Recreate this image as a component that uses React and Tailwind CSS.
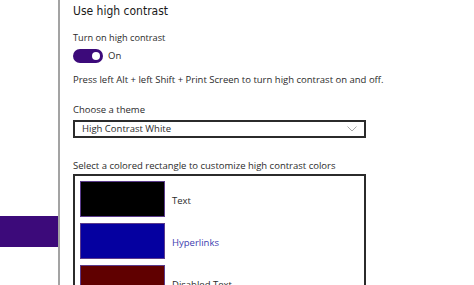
import React from "react";

const font = { fontFamily: '"Open Sans", "Noto Sans", sans-serif' };

function Swatch({ color, label, labelClass }) {
  return (
    <div className="flex items-center">
      <div className={`w-[85px] h-[36px] border border-[#5b3b8c] ${color}`} />
      <span className={`ml-[7px] mt-[3px] text-[9.5px] leading-[14px] ${labelClass}`}>{label}</span>
    </div>
  );
}

export default function App() {
  return (
    <div className="w-[474px] h-[285px] bg-white flex overflow-hidden text-[#2b2b2b]" style={font}>
      <div className="w-[58px] h-full flex flex-col shrink-0">
        <div className="h-[216px]" />
        <div className="h-[31px] bg-[#3c0a7a]" />
      </div>
      <div className="w-[2px] h-full bg-[#a3a3a3] shrink-0" />
      <div className="flex flex-col pl-[13px]">
        <div
          className="mt-[1px] h-[20px] leading-[20px] text-[12px] font-stretch-condensed text-[#1a1a1a] whitespace-nowrap"
          style={{ fontFamily: '"DejaVu Sans Condensed", "DejaVu Sans", "Open Sans", sans-serif' }}
        >
          Use high contrast
        </div>
        <div className="mt-[10px] h-[14px] leading-[14px] text-[9.2px]">Turn on high contrast</div>
        <div className="mt-[4px] h-[14px] flex items-center">
          <div className="w-[30px] h-[14px] rounded-full bg-[#3c0a7a] flex items-center justify-end pr-[3px]">
            <div className="w-[8px] h-[8px] rounded-full bg-white" />
          </div>
          <span className="ml-[5px] text-[9.5px] leading-[14px]">On</span>
        </div>
        <div className="mt-[10px] h-[14px] leading-[14px] text-[9.5px] whitespace-nowrap">
          Press left Alt + left Shift + Print Screen to turn high contrast on and off.
        </div>
        <div className="mt-[16px] h-[14px] leading-[14px] text-[9.5px]">Choose a theme</div>
        <div className="mt-[3px] w-[293px] h-[20px] border-2 border-[#2b2b2b] flex items-center justify-between pl-[7px] pr-[7px]">
          <span className="text-[9.5px] leading-[14px]">High Contrast White</span>
          <svg width="10" height="6" viewBox="0 0 10 6" fill="none">
            <path d="M0.5 0.5 L5 5 L9.5 0.5" stroke="#a8a8a8" strokeWidth="1" />
          </svg>
        </div>
        <div className="mt-[21px] h-[14px] leading-[14px] text-[9.5px] whitespace-nowrap">
          Select a colored rectangle to customize high contrast colors
        </div>
        <div className="mt-[1px] w-[293px] h-[200px] border-2 border-[#2b2b2b] flex flex-col gap-[6px] pl-[5px] pt-[5px]">
          <Swatch color="bg-black" label="Text" labelClass="text-[#2b2b2b]" />
          <Swatch color="bg-[#0500a0]" label="Hyperlinks" labelClass="text-[#3c3caf]" />
          <Swatch color="bg-[#600000]" label="Disabled Text" labelClass="text-[#2b2b2b]" />
        </div>
      </div>
    </div>
  );
}
